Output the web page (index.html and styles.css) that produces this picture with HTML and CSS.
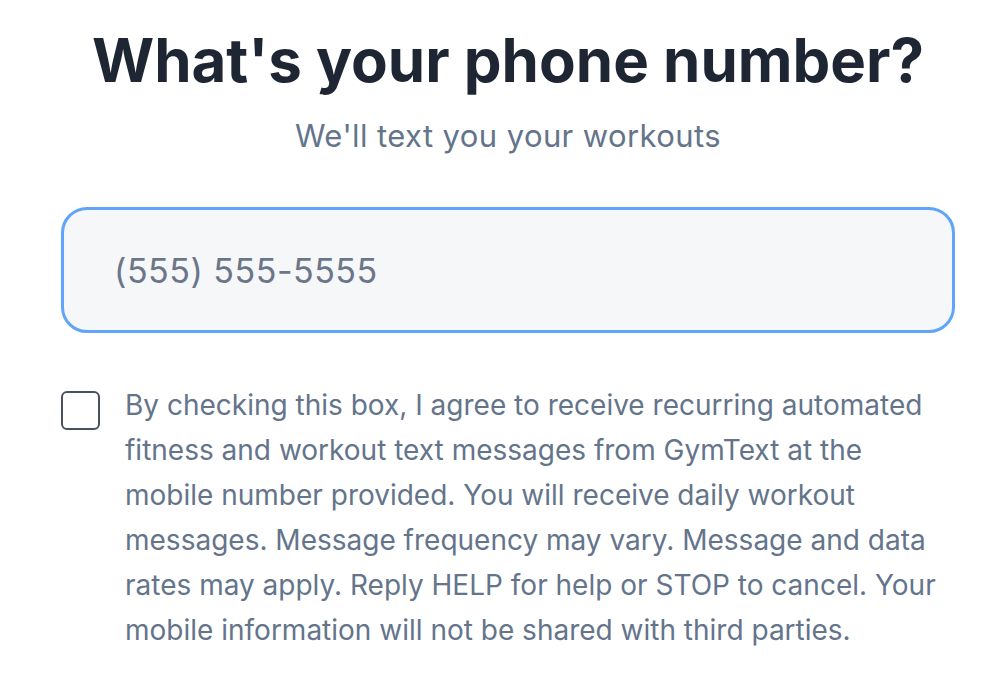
FILE: index.html
```html
<!DOCTYPE html>
<html lang="en">
<head>
    <meta charset="UTF-8">
    <meta name="viewport" content="width=device-width, initial-scale=1.0">
    <title>GymText - Sign Up</title>
    <link rel="stylesheet" href="styles.css">
</head>
<body>
    <main class="signup">
        <h1 class="signup-title">What's your phone number?</h1>
        <p class="signup-subtitle">We'll text you your workouts</p>

        <form id="phoneForm">
            <input class="phone-input" type="tel" id="phone" name="phone" placeholder="(555) 555-5555">

            <label class="consent" for="consent">
                <input class="consent-box" type="checkbox" id="consent" name="consent">
                <span class="consent-text">By checking this box, I agree to receive recurring automated fitness and workout text messages from GymText at the mobile number provided. You will receive daily workout messages. Message frequency may vary. Message and data rates may apply. Reply HELP for help or STOP to cancel. Your mobile information will not be shared with third parties.</span>
            </label>
        </form>
    </main>
</body>
</html>
```

FILE: styles.css
```css
body {
    margin: 0;
    padding: 0;
    background: #fff;
    font-family: Inter, "Noto Sans", Arial, sans-serif;
}
.signup {
    width: 894px;
    margin-left: 61px;
    padding-top: 24px;
}
.signup-title {
    margin: 0;
    font-size: 60px;
    line-height: 72px;
    font-weight: 700;
    color: #1e2533;
    text-align: center;
}
.signup-subtitle {
    margin: 20px 0 0;
    font-size: 31px;
    line-height: 40px;
    letter-spacing: 0.4px;
    color: #64748b;
    text-align: center;
}
.phone-input {
    display: block;
    width: 100%;
    height: 126px;
    margin-top: 51px;
    padding: 0 0 0 50px;
    box-sizing: border-box;
    border: 3px solid #60a5fa;
    border-radius: 26px;
    background: #f6f7f9;
    font-family: inherit;
    font-size: 34px;
    letter-spacing: 0.5px;
    color: #1e2533;
    outline: none;
}
.phone-input::placeholder {
    color: #6b7689;
}
.consent {
    display: flex;
    align-items: flex-start;
    gap: 25px;
    margin-top: 50px;
}
.consent-box {
    appearance: none;
    flex-shrink: 0;
    width: 39px;
    height: 39px;
    margin: 8px 0 0;
    border: 2px solid #4b5160;
    border-radius: 6px;
    background: #fff;
}
.consent-text {
    font-size: 28px;
    line-height: 45px;
    color: #64748b;
}
```
